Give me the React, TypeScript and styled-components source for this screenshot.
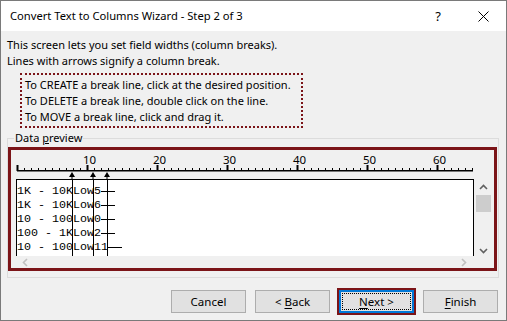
import * as React from "react";
import styled, { createGlobalStyle } from "styled-components";

const UI_FONT = `"Segoe UI", "Noto Sans", "Liberation Sans", sans-serif`;
const MONO_FONT = `"Liberation Mono", "Courier New", monospace`;
const CHAR = 7;
const COLS = 65;
const BREAKS = [8, 11, 13];

const ROWS = [
  { text: "1K - 10KLow5", tail: 2 },
  { text: "1K - 10KLow6", tail: 2 },
  { text: "10 - 100Low0", tail: 2 },
  { text: "100 - 1KLow2", tail: 2 },
  { text: "10 - 100Low11", tail: 2 },
];

const GlobalStyle = createGlobalStyle`
  html, body {
    margin: 0;
    padding: 0;
    background: #f0f0f0;
  }
  * {
    box-sizing: border-box;
  }
`;

const Window = styled.div`
  width: 507px;
  height: 321px;
  border: 1px solid #7a7a7a;
  background: #f0f0f0;
  display: flex;
  flex-direction: column;
  font-family: ${UI_FONT};
  font-size: 11px;
  color: #000;
  overflow: hidden;
`;

const TitleBar = styled.div`
  height: 30px;
  flex: none;
  background: #fff;
  display: flex;
  align-items: center;
  padding-left: 9px;
`;

const Title = styled.span`
  flex: 1;
  font-size: 11.2px;
  padding-bottom: 1px;
`;

const HelpButton = styled.span`
  width: 12px;
  margin-right: 34px;
  text-align: center;
  font-size: 13px;
`;

const CloseButton = styled.svg`
  margin-right: 17px;
`;

const Body = styled.div`
  flex: 1;
  display: flex;
  flex-direction: column;
  padding: 6px 7px 0 6px;
`;

const Line = styled.div`
  height: 16px;
  line-height: 16px;
  white-space: nowrap;
`;

const Hints = styled.div`
  margin: 4px 0 0 13px;
  width: 283px;
  height: 55px;
  border: 2px dotted #7b1418;
  padding: 2px 0 0 3px;
`;

const GroupBox = styled.div`
  position: relative;
  margin-top: 10px;
  height: 140px;
  border: 1px solid #dcdcdc;
  padding: 8px 1px 6px 0;
`;

const Legend = styled.span`
  position: absolute;
  top: -9px;
  left: 6px;
  padding: 0 1px;
  background: #f0f0f0;
  line-height: 16px;
`;

const FocusFrame = styled.div`
  height: 100%;
  border: 3px solid #7b1418;
  padding: 0 0 0 5px;
  display: flex;
  flex-direction: column;
`;

const Ruler = styled.svg`
  display: block;
  flex: none;
`;

const PreviewRow = styled.div`
  display: flex;
  height: 77px;
`;

const Preview = styled.div`
  position: relative;
  width: 458px;
  background: #fff;
  border: 1px solid #000;
  border-bottom: none;
  padding-top: 4px;
  overflow: hidden;
`;

const DataLine = styled.div`
  height: 14px;
  line-height: 14px;
  font-family: ${MONO_FONT};
  font-size: 11.67px;
  white-space: pre;
  display: flex;
  align-items: center;
`;

const Tail = styled.span<{ $chars: number }>`
  display: inline-block;
  width: ${({ $chars }) => $chars * CHAR}px;
  height: 1px;
  background: #000;
`;

const BreakOverlay = styled.svg`
  position: absolute;
  left: -1px;
  top: 0;
`;

const VScroll = styled.div`
  width: 18px;
  display: flex;
  flex-direction: column;
  align-items: center;
  padding-top: 4px;
`;

const Thumb = styled.div`
  width: 15px;
  height: 17px;
  margin: 3px 0 0 1px;
  background: #cdcdcd;
`;

const Spacer = styled.div`
  flex: 1;
`;

const HScroll = styled.div`
  width: 458px;
  height: 12px;
  display: flex;
  align-items: center;
  justify-content: space-between;
  padding: 0 5px 0 5px;
`;

const ButtonRow = styled.div`
  display: flex;
  justify-content: flex-end;
  gap: 9px;
  margin-top: 12px;
  padding-right: 1px;
`;

const Button = styled.div<{ $default?: boolean }>`
  position: relative;
  width: 75px;
  height: 23px;
  display: flex;
  align-items: center;
  justify-content: center;
  background: #e1e1e1;
  border: ${({ $default }) => ($default ? "2px solid #0078d7" : "1px solid #adadad")};
  outline: ${({ $default }) => ($default ? "2px solid #7b1418" : "none")};
  font-size: 11.5px;
  padding-bottom: 1px;
  white-space: pre;

  u {
    text-underline-offset: 2px;
  }
`;

const FocusRect = styled.span`
  position: absolute;
  inset: 1px;
  border: 1px dotted #000;
`;

const Chevron: React.FC<{ dir: "up" | "down" | "left" | "right"; color: string }> = ({
  dir,
  color,
}) => {
  const paths = {
    up: "M1 6 L4.5 2.5 L8 6",
    down: "M1 2 L4.5 5.5 L8 2",
    left: "M6 1 L2.5 4.5 L6 8",
    right: "M2 1 L5.5 4.5 L2 8",
  };
  return (
    <svg width="9" height="9" viewBox="0 0 9 9">
      <path d={paths[dir]} fill="none" stroke={color} strokeWidth="1.6" />
    </svg>
  );
};

const RulerDrawing: React.FC = () => {
  const ticks = [];
  for (let c = 0; c <= COLS; c++) {
    const x = 1 + c * CHAR + 0.5;
    const major = c % 10 === 0;
    ticks.push(
      <line key={c} x1={x} x2={x} y1={major ? 15 : 18} y2={21} stroke="#000" strokeWidth={major ? 2 : 1} />
    );
    if (major && c > 0) {
      ticks.push(
        <text key={`t${c}`} x={x + 2} y={14} fontSize="11.5" fontFamily={UI_FONT} textAnchor="middle">
          {c}
        </text>
      );
    }
  }
  return (
    <Ruler width={460} height={29}>
      <rect x={1} y={20} width={COLS * CHAR + 1} height={1.5} fill="#000" />
      {ticks}
      {BREAKS.map((b) => {
        const x = b * CHAR;
        return (
          <g key={b}>
            <path d={`M${x - 3} 27 L${x + 3} 27 L${x} 22 Z`} fill="#000" />
            <rect x={x - 0.5} y={26} width={1} height={3} fill="#000" />
          </g>
        );
      })}
    </Ruler>
  );
};

export default function App() {
  return (
    <>
      <GlobalStyle />
      <Window>
        <TitleBar>
          <Title>Convert Text to Columns Wizard - Step 2 of 3</Title>
          <HelpButton>?</HelpButton>
          <CloseButton width="11" height="11" viewBox="0 0 11 11">
            <path d="M0.5 0.5 L10.5 10.5 M10.5 0.5 L0.5 10.5" stroke="#000" strokeWidth="1" />
          </CloseButton>
        </TitleBar>
        <Body>
          <Line>This screen lets you set field widths (column breaks).</Line>
          <Line>Lines with arrows signify a column break.</Line>
          <Hints>
            <Line>To CREATE a break line, click at the desired position.</Line>
            <Line>To DELETE a break line, double click on the line.</Line>
            <Line>To MOVE a break line, click and drag it.</Line>
          </Hints>
          <GroupBox>
            <Legend>
              Data <u>p</u>review
            </Legend>
            <FocusFrame>
              <RulerDrawing />
              <PreviewRow>
                <Preview>
                  {ROWS.map((r) => (
                    <DataLine key={r.text}>
                      {r.text}
                      <Tail $chars={r.tail} />
                    </DataLine>
                  ))}
                  <BreakOverlay width={458} height={77}>
                    {BREAKS.map((b) => (
                      <rect key={b} x={b * CHAR} y={0} width={1} height={77} fill="#000" />
                    ))}
                  </BreakOverlay>
                </Preview>
                <VScroll>
                  <Chevron dir="up" color="#606060" />
                  <Thumb />
                  <Spacer />
                  <Chevron dir="down" color="#606060" />
                </VScroll>
              </PreviewRow>
              <HScroll>
                <Chevron dir="left" color="#c0c0c0" />
                <Chevron dir="right" color="#c0c0c0" />
              </HScroll>
            </FocusFrame>
          </GroupBox>
          <ButtonRow>
            <Button>Cancel</Button>
            <Button>
              <span>
                &lt; <u>B</u>ack
              </span>
            </Button>
            <Button $default>
              <FocusRect />
              <span>
                <u>N</u>ext &gt;
              </span>
            </Button>
            <Button>
              <span>
                <u>F</u>inish
              </span>
            </Button>
          </ButtonRow>
        </Body>
      </Window>
    </>
  );
}
